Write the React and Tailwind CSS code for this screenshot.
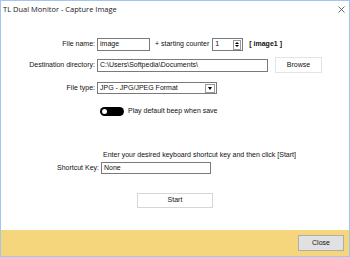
export default function App() {
  return (
    <div className="w-[350px] h-[257px] bg-white border border-[#a3c6ee] flex flex-col text-[7px] text-[#111] font-['Liberation_Sans',Arial,sans-serif] overflow-hidden">
      {/* Title bar */}
      <div className="h-[17px] flex items-center justify-between pl-[2px] pr-[4px]">
        <span className="text-[7.5px] font-normal text-[#222] font-['Open_Sans',sans-serif]">TL Dual Monitor - Capture Image</span>
        <svg width="7" height="7" viewBox="0 0 7 7" className="text-[#444]">
          <path d="M0.5 0.5 L6.5 6.5 M6.5 0.5 L0.5 6.5" stroke="currentColor" strokeWidth="0.8" />
        </svg>
      </div>

      {/* File name */}
      <div className="mt-[20px] h-[13px] flex items-center">
        <div className="w-[96px] text-right pr-[2px]">File name:</div>
        <div className="w-[53px] h-[13px] border border-[#7a7a7a] px-[2px] flex items-center">image</div>
        <span className="ml-[5px]">+ starting counter</span>
        <div className="ml-[3px] w-[31px] h-[13px] border border-[#7a7a7a] flex items-center justify-between pl-[2px] pr-[1px]">
          <span>1</span>
          <div className="w-[8px] h-[10px] border border-[#999] flex flex-col items-center justify-center gap-[1px]">
            <div className="w-0 h-0 border-l-[2px] border-r-[2px] border-b-[2px] border-l-transparent border-r-transparent border-b-black" />
            <div className="w-0 h-0 border-l-[2px] border-r-[2px] border-t-[2px] border-l-transparent border-r-transparent border-t-black" />
          </div>
        </div>
        <span className="ml-[6px] font-bold">[ image1 ]</span>
      </div>

      {/* Destination directory */}
      <div className="mt-[6px] h-[16px] flex items-center">
        <div className="w-[96px] text-right pr-[2px]">Destination directory:</div>
        <div className="w-[171px] h-[13px] border border-[#7a7a7a] px-[2px] flex items-center">C:\Users\Softpedia\Documents\</div>
        <div className="ml-[7px] w-[47px] h-[16px] border border-[#e3e3e3] flex items-center justify-center">Browse</div>
      </div>

      {/* File type */}
      <div className="mt-[9px] h-[12px] flex items-center">
        <div className="w-[96px] text-right pr-[2px]">File type:</div>
        <div className="w-[120px] h-[12px] border border-[#7a7a7a] flex items-center justify-between pl-[2px] pr-[1px]">
          <span>JPG - JPG/JPEG Format</span>
          <div className="w-[10px] h-[9px] border border-[#999] flex items-center justify-center">
            <div className="w-0 h-0 border-l-[2.5px] border-r-[2.5px] border-t-[3px] border-l-transparent border-r-transparent border-t-black" />
          </div>
        </div>
      </div>

      {/* Beep toggle */}
      <div className="mt-[13px] h-[9px] flex items-center pl-[99px]">
        <div className="w-[24px] h-[9px] rounded-full bg-black flex items-center pl-[2px]">
          <div className="w-[5px] h-[5px] rounded-full bg-white" />
        </div>
        <span className="ml-[4px]">Play default beep when save</span>
      </div>

      {/* Shortcut */}
      <div className="mt-[34px] pl-[102px] leading-[9px]">Enter your desired keyboard shortcut key and then click [Start]</div>
      <div className="mt-[3px] h-[12px] flex items-center">
        <div className="w-[100px] text-right pr-[2px]">Shortcut Key:</div>
        <div className="w-[110px] h-[12px] border border-[#7a7a7a] px-[2px] flex items-center">None</div>
      </div>

      {/* Start */}
      <div className="mt-[19px] flex justify-center">
        <div className="w-[76px] h-[15px] border border-[#d6d6d6] flex items-center justify-center">Start</div>
      </div>

      <div className="flex-1" />

      {/* Footer */}
      <div className="h-[26px] bg-[#f5d67c] flex items-center justify-end pr-[5px]">
        <div className="w-[46px] h-[16px] bg-[#e1e1e1] border border-[#adadad] flex items-center justify-center">Close</div>
      </div>
    </div>
  );
}
